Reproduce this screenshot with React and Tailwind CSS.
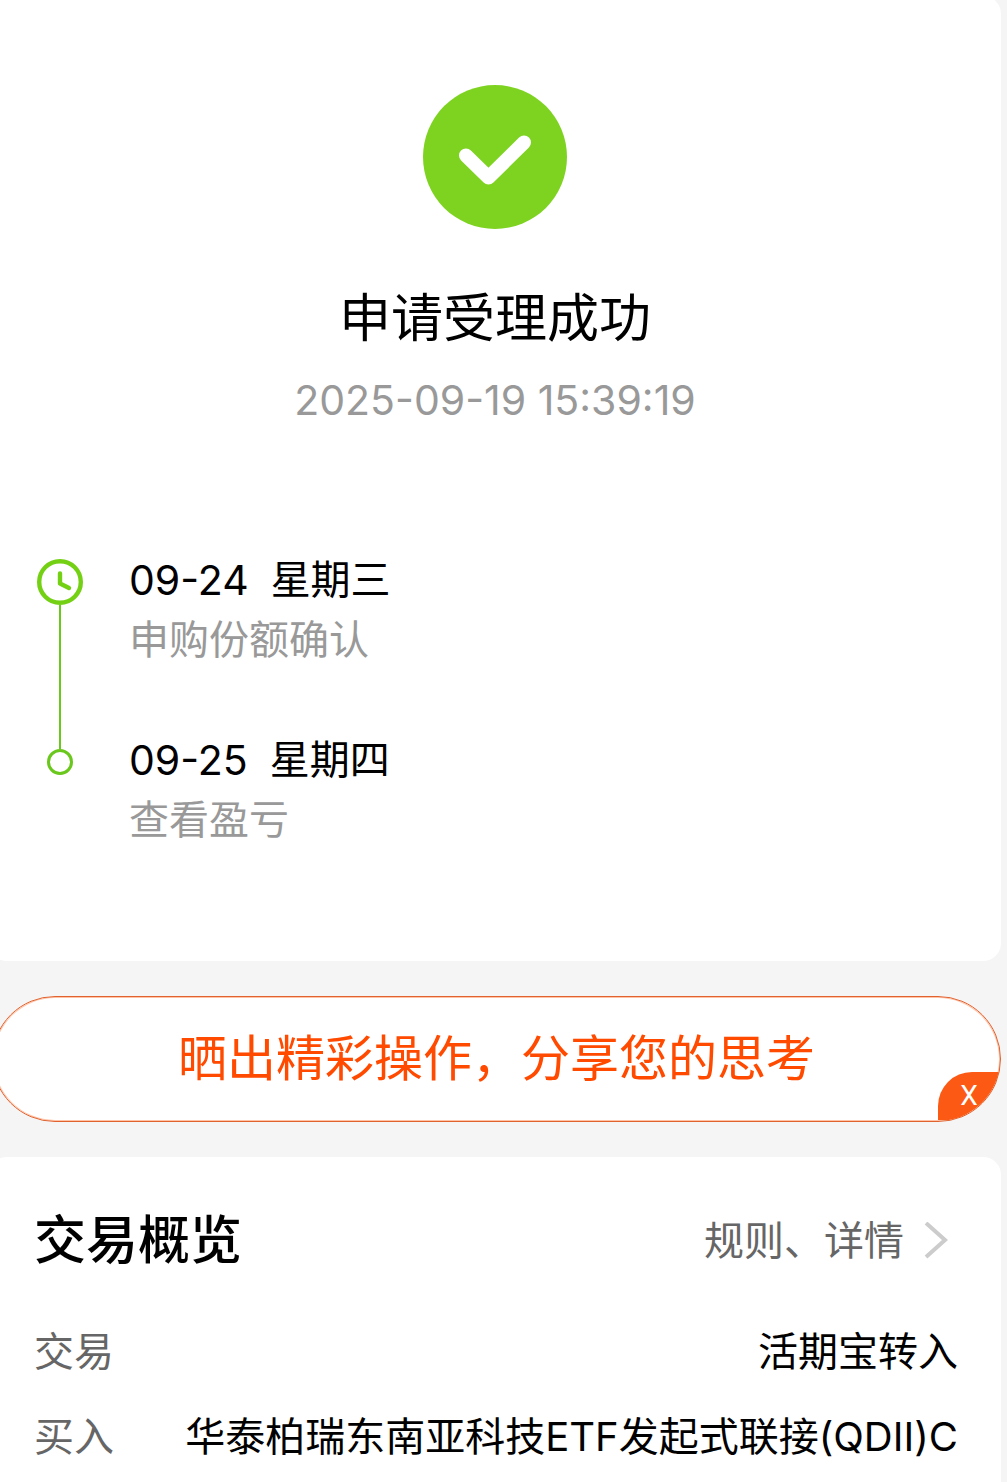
import React from 'react';

const steps = [
    { date: '09-24', weekday: '星期三', note: '申购份额确认' },
    { date: '09-25', weekday: '星期四', note: '查看盈亏' },
];

const rows = [
    { label: '交易', value: '活期宝转入' },
    { label: '买入', value: '华泰柏瑞东南亚科技ETF发起式联接(QDII)C' },
];

function SuccessIcon() {
    return (
        <svg viewBox="0 0 144 144" className="w-36 h-36" aria-hidden="true">
            <circle cx="72" cy="72" r="72" fill="#7ed321" />
            <path d="M43 70.500L65.500 92.500L101 57.500" fill="none" stroke="#fff" strokeWidth="14" strokeLinecap="round" strokeLinejoin="round" />
        </svg>
    );
}

function ClockIcon() {
    return (
        <svg viewBox="0 0 46 46" className="w-[46px] h-[46px] shrink-0" fill="none" stroke="#73d013" aria-hidden="true">
            <circle cx="23" cy="23" r="20.800" strokeWidth="4.400" />
            <path d="M23 14.500V24.500L32 29" strokeWidth="4.400" strokeLinecap="round" strokeLinejoin="round" />
        </svg>
    );
}

function Step({ step, first }) {
    return (
        <li className="flex gap-[46px]">
            <div className="flex flex-col items-center w-[46px]">
                {first ? (
                    <>
                        <div className="h-[9px]" />
                        <ClockIcon />
                        <div className="w-[2px] flex-1 bg-[#6ac71c]" />
                    </>
                ) : (
                    <>
                        <div className="w-[2px] h-[19px] bg-[#6ac71c]" />
                        <div className="w-[26px] h-[26px] rounded-full border-3 border-[#6ac71c]" />
                    </>
                )}
            </div>
            <div className={first ? 'pb-[60px]' : ''}>
                <p className="flex gap-[22px] text-[40px] leading-[60px] text-black">
                    <span className="text-[41px]">{step.date}</span>
                    <span>{step.weekday}</span>
                </p>
                <p className="text-[40px] leading-[60px] text-[#999]">{step.note}</p>
            </div>
        </li>
    );
}

export default function App() {
    return (
        <div className="min-h-screen overflow-hidden flex flex-col bg-[#f5f5f5] font-[Inter,'Noto_Sans_CJK_SC',sans-serif]">
            <main className="flex-1 flex flex-col -ml-[11px] mr-[6px]">
                {/* 受理结果 */}
                <section className="-mt-1 pt-[89px] pb-[111px] bg-white rounded-[18px]">
                    <div className="flex flex-col items-center">
                        <SuccessIcon />
                        <h1 className="mt-12 text-[52px] leading-[84px] text-black">申请受理成功</h1>
                        <time className="text-[41px] leading-[78px] text-[#999]">2025-09-19 15:39:19</time>
                    </div>
                    <ol className="mt-[111px] px-12">
                        {steps.map((step, i) => (
                            <Step key={step.date} step={step} first={i === 0} />
                        ))}
                    </ol>
                </section>

                {/* 分享入口 */}
                <div className="relative my-[35px] ml-[3px] rounded-full overflow-hidden bg-white border border-[#e0622f] shadow-[inset_0_0_0_1px_#ffc4a8]">
                    <a href="#share" className="block text-center text-[49px] leading-[124px] text-[#ff4a00]">晒出精彩操作，分享您的思考</a>
                    <button type="button" className="absolute right-0 bottom-px w-[62px] h-12 rounded-tl-[34px] bg-[#fc5a14] text-white text-[28px] font-[Roboto,sans-serif]">
                        X
                    </button>
                </div>

                {/* 交易概览 */}
                <section className="flex-1 pt-[42px] pl-[45px] pr-[43px] bg-white rounded-t-[18px]">
                    <div className="flex items-center justify-between">
                        <h2 className="text-[52px] leading-[84px] font-medium text-black">交易概览</h2>
                        <a href="#rules" className="flex items-center gap-5 pr-[10px] text-[40px] leading-[60px] text-[#666]">
                            规则、详情
                            <svg viewBox="0 0 24 38" className="w-6 h-[38px]" fill="none" stroke="#ccc" strokeWidth="4" aria-hidden="true">
                                <path d="M2 1L21 18L2 35" />
                            </svg>
                        </a>
                    </div>
                    <dl className="mt-[26px] text-[40px] leading-[85px]">
                        {rows.map((row) => (
                            <div key={row.label} className="flex justify-between whitespace-nowrap">
                                <dt className="text-[#666]">{row.label}</dt>
                                <dd className="text-black">{row.value}</dd>
                            </div>
                        ))}
                    </dl>
                </section>
            </main>
        </div>
    );
}
